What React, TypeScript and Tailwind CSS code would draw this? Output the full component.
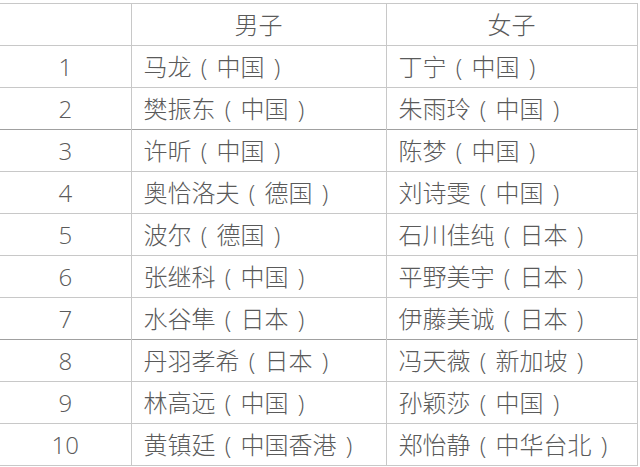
import React from 'react';

const rows: [string, string, string, string, string][] = [
  ['1', '马龙', '中国', '丁宁', '中国'],
  ['2', '樊振东', '中国', '朱雨玲', '中国'],
  ['3', '许昕', '中国', '陈梦', '中国'],
  ['4', '奥恰洛夫', '德国', '刘诗雯', '中国'],
  ['5', '波尔', '德国', '石川佳纯', '日本'],
  ['6', '张继科', '中国', '平野美宇', '日本'],
  ['7', '水谷隼', '日本', '伊藤美诚', '日本'],
  ['8', '丹羽孝希', '日本', '冯天薇', '新加坡'],
  ['9', '林高远', '中国', '孙颖莎', '中国'],
  ['10', '黄镇廷', '中国香港', '郑怡静', '中华台北'],
];

const darker = new Set([1, 6]);

function Player({ name, country }: { name: string; country: string }) {
  return (
    <span>
      {name}
      <span className="inline-block w-[25px] text-center">(</span>
      {country}
      <span className="inline-block w-[25px] text-center">)</span>
    </span>
  );
}

export default function App() {
  return (
    <div className="w-[640px] h-[467px] bg-white pt-[3px] overflow-hidden text-[#5a5a5a] text-[24px] font-light font-['Open_Sans','Noto_Sans_CJK_SC',sans-serif]">
      <table className="border-collapse w-[637px] table-fixed">
        <colgroup>
          <col className="w-[131px]" />
          <col className="w-[255px]" />
          <col className="w-[251px]" />
        </colgroup>
        <thead>
          <tr className="h-[42px] border-t border-b border-[#c8c8c8]">
            <th className="font-light"></th>
            <th className="font-light text-center border-l border-[#c8c8c8]">男子</th>
            <th className="font-light text-center border-l border-r border-[#c8c8c8]">女子</th>
          </tr>
        </thead>
        <tbody>
          {rows.map(([n, m, mc, w, wc], i) => (
            <tr
              key={n}
              className={`h-[42px] border-b ${darker.has(i) ? 'border-[#a0a0a0]' : 'border-[#c8c8c8]'}`}
            >
              <td className="text-center leading-none">{n}</td>
              <td className="pl-3 border-l border-[#c8c8c8] whitespace-nowrap leading-none">
                <Player name={m} country={mc} />
              </td>
              <td className="pl-3 border-l border-r border-[#c8c8c8] whitespace-nowrap leading-none">
                <Player name={w} country={wc} />
              </td>
            </tr>
          ))}
        </tbody>
      </table>
    </div>
  );
}
